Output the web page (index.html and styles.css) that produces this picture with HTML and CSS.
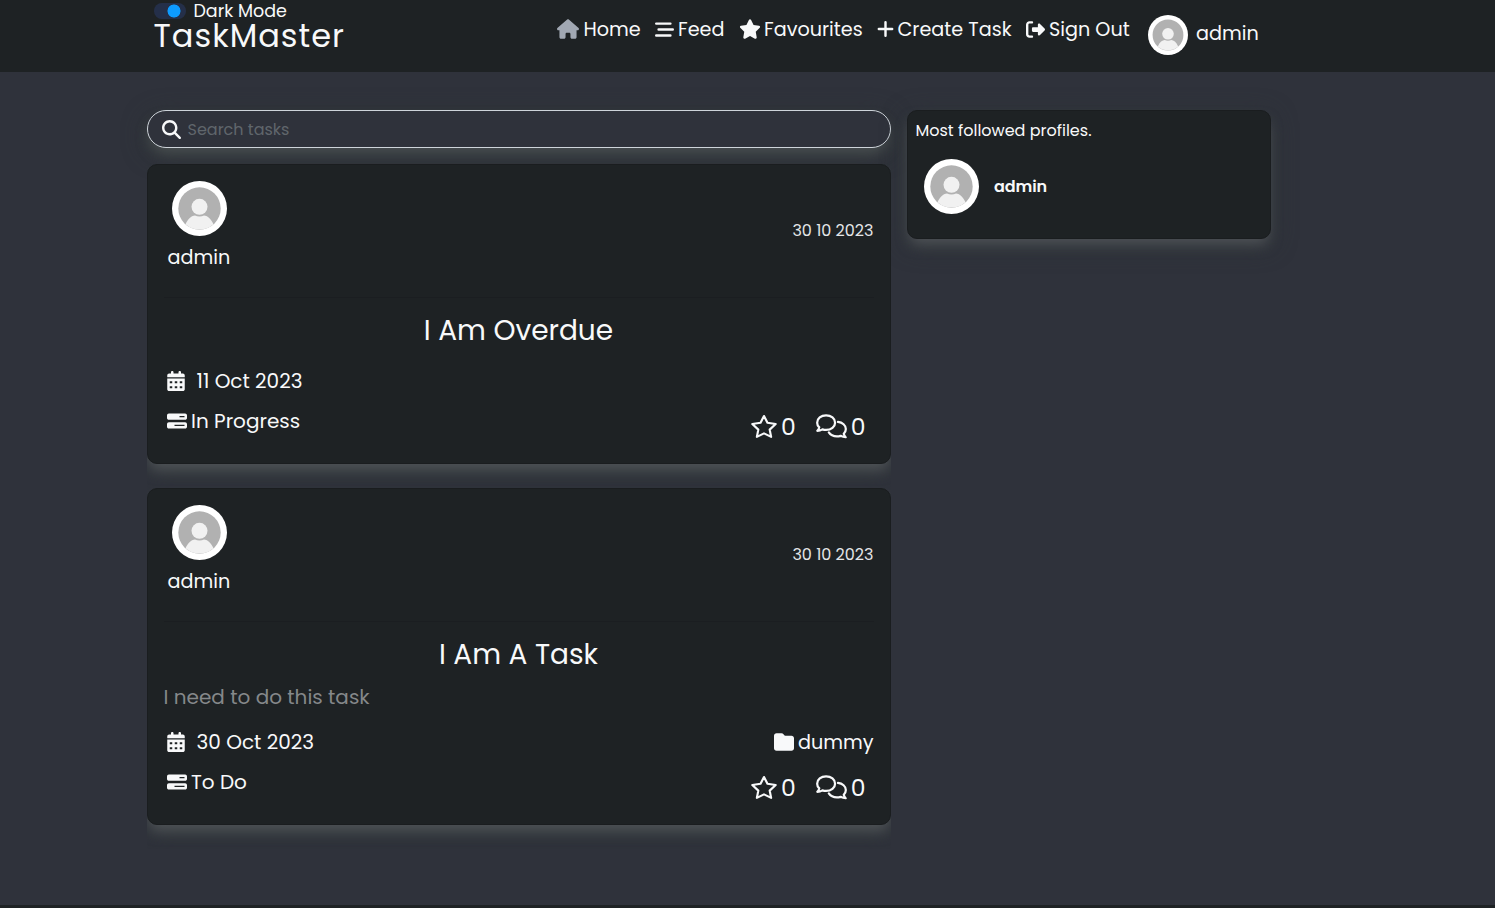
FILE: index.html
```
<!DOCTYPE html>
<html lang="en">
<head>
<meta charset="utf-8">
<title>TaskMaster</title>
<link rel="stylesheet" href="styles.css">
</head>
<body>
<svg class="sprite" aria-hidden="true">
  <symbol id="home" viewBox="0 0 576 512"><path d="M575.8 255.5c0 18-15 32.1-32 32.1h-32l.7 160.2V472c0 22.1-17.9 40-40 40H392c-22.1 0-40-17.9-40-40V384c0-17.7-14.3-32-32-32H256c-17.7 0-32 14.3-32 32v88c0 22.1-17.9 40-40 40H104c-22.1 0-40-17.9-40-40V287.600H32c-18 0-32-14-32-32.100c0-9 3-17 10-24L266.400 8c7-7 15-8 22-8s15 2 21 7L564.800 231.500c8 7 12 15 11 24z"/></symbol>
  <symbol id="feed" viewBox="0 0 512 512"><path d="M32 96H416M96 256H480M32 416H416" fill="none" stroke="currentColor" stroke-width="64" stroke-linecap="round"/></symbol>
  <symbol id="star" viewBox="0 0 576 512"><path d="M316.900 18C311.600 7 300.400 0 288.100 0s-23.400 7-28.800 18L195 150.300 51.400 171.500c-12 1.800-22 10.200-25.700 21.700s-.7 24.200 7.900 32.700L137.800 329 113.200 474.700c-2 12 3 24.200 12.900 31.300s23 8 33.800 2.300l128.300-68.500 128.300 68.500c10.800 5.700 23.900 4.900 33.800-2.300s14.900-19.300 12.900-31.300L438.500 329 542.700 225.900c8.600-8.500 11.700-21.200 7.900-32.700s-13.700-19.900-25.700-21.700L381.200 150.300 316.900 18z"/></symbol>
  <symbol id="star-line" viewBox="0 0 576 512"><path d="M288 25L365 174 547 201 414 326 446 486 288 408 130 486 162 326 29 201 211 174Z" fill="none" stroke="currentColor" stroke-width="48" stroke-linejoin="round"/></symbol>
  <symbol id="plus" viewBox="0 0 448 512"><path d="M48 256H400M224 80V432" fill="none" stroke="currentColor" stroke-width="64" stroke-linecap="round"/></symbol>
  <symbol id="out" viewBox="0 0 512 512"><path d="M377.900 105.900L500.700 228.700c7.200 7.200 11.300 17.100 11.300 27.300s-4.100 20.100-11.300 27.300L377.900 406.100c-6.400 6.400-15 9.900-24 9.900c-18.700 0-33.900-15.200-33.900-33.900V320H192c-17.700 0-32-14.300-32-32v-64c0-17.700 14.300-32 32-32h128v-62.100c0-18.700 15.200-33.900 33.900-33.900c9 0 17.600 3.600 24 9.900zM160 96H96c-17.700 0-32 14.300-32 32v256c0 17.700 14.300 32 32 32h64c17.700 0 32 14.300 32 32s-14.300 32-32 32H96c-53 0-96-43-96-96V128C0 75 43 32 96 32h64c17.700 0 32 14.300 32 32s-14.300 32-32 32z"/></symbol>
  <symbol id="search" viewBox="0 0 512 512"><path d="M416 208c0 45.900-14.900 88.300-40 122.700L502.600 457.400c12.500 12.500 12.500 32.800 0 45.300s-32.800 12.500-45.300 0L330.700 376c-34.400 25.200-76.800 40-122.700 40C93.100 416 0 322.900 0 208S93.100 0 208 0S416 93.100 416 208zM208 352a144 144 0 1 0 0-288 144 144 0 1 0 0 288z"/></symbol>
  <symbol id="calendar" viewBox="0 0 448 512"><path fill-rule="evenodd" d="M128 0c17.700 0 32 14.300 32 32v32h128V32c0-17.700 14.300-32 32-32s32 14.300 32 32v32h48c26.500 0 48 21.500 48 48v48H0v-48c0-26.500 21.500-48 48-48h48V32c0-17.700 14.300-32 32-32zM0 192H448V464c0 26.500-21.500 48-48 48H48c-26.500 0-48-21.500-48-48zM64 264v48h64v-48zM192 264v48h64v-48zM320 264v48h64v-48zM64 392v48h64v-48zM192 392v48h64v-48zM320 392v48h64v-48z"/></symbol>
  <symbol id="progress" viewBox="0 0 512 512"><path fill-rule="evenodd" d="M448 160H320V128H448v32zM48 64C21.500 64 0 85.500 0 112v64c0 26.500 21.500 48 48 48H464c26.500 0 48-21.500 48-48V112c0-26.500-21.500-48-48-48H48zM448 352v32H192V352H448zM48 288c-26.500 0-48 21.500-48 48v64c0 26.500 21.500 48 48 48H464c26.500 0 48-21.500 48-48V336c0-26.500-21.500-48-48-48H48z"/></symbol>
  <symbol id="folder" viewBox="0 0 512 512"><path d="M64 480H448c35.300 0 64-28.700 64-64V160c0-35.300-28.700-64-64-64H288c-10.100 0-19.600-4.700-25.600-12.800L243.200 57.600C231.100 41.500 212.100 32 192 32H64C28.700 32 0 60.700 0 96V416c0 35.300 28.700 64 64 64z"/></symbol>
  <symbol id="comments" viewBox="0 0 640 512"><g fill="none" stroke="currentColor" stroke-width="46" stroke-linejoin="round" stroke-linecap="round"><path d="M208 24C104 24 24 90 24 176c0 37 16 71 43 98-5 28-19 50-39 70 41 0 76-12 105-29 24 9 49 13 75 13 104 0 186-67 186-152S312 24 208 24Z"/><path d="M454 160c92 10 162 72 162 148 0 38-16 72-43 99 5 27 19 50 39 70-41 0-76-12-105-28-23 8-48 12-75 12-73 0-136-33-167-82"/></g></symbol>
  <symbol id="person" viewBox="0 0 55 55"><circle cx="27.500" cy="27.500" r="27.500" fill="#fff"/><circle cx="27.500" cy="27.500" r="21.200" fill="#b1b1b1"/><circle cx="27.500" cy="25.800" r="8" fill="#f1f1f1"/><path d="M13.500 43.300C16 37.500 20 34.500 23 34.500c2.500 1.300 6.500 1.300 9 0 3 0 7 3 9.500 8.800a21.200 21.200 0 0 1-28 0Z" fill="#f1f1f1"/></symbol>
</svg>
<header class="navbar">
  <div class="brand">
    <div class="mode"><span class="switch"></span><span class="mode-label">Dark Mode</span></div>
    <div class="logo">TaskMaster</div>
  </div>
  <nav class="links">
    <a class="link home"><svg class="i22"><use href="#home"/></svg><span>Home</span></a>
    <a class="link feed"><svg class="i19"><use href="#feed"/></svg><span>Feed</span></a>
    <a class="link fav"><svg class="i22"><use href="#star"/></svg><span>Favourites</span></a>
    <a class="link create"><svg class="i17"><use href="#plus"/></svg><span>Create Task</span></a>
    <a class="link out"><svg class="i19"><use href="#out"/></svg><span>Sign Out</span></a>
    <a class="me"><svg class="avatar-sm"><use href="#person"/></svg><span>admin</span></a>
  </nav>
</header>
<main class="page">
  <section class="tasks">
    <div class="search"><svg class="i19"><use href="#search"/></svg><span>Search tasks</span></div>
    <article class="card">
      <div class="card-head">
        <div class="owner"><svg class="avatar"><use href="#person"/></svg><span>admin</span></div>
        <span class="date">30 10 2023</span>
      </div>
      <h2 class="title overdue">I Am Overdue</h2>
      <div class="row due"><span class="item"><svg class="cal"><use href="#calendar"/></svg><span class="due-text">11 Oct 2023</span></span></div>
      <div class="row status"><span class="item"><svg class="i20"><use href="#progress"/></svg><span>In Progress</span></span>
        <span class="counts"><svg class="star"><use href="#star-line"/></svg><span class="n">0</span><svg class="talk"><use href="#comments"/></svg><span class="n">0</span></span></div>
    </article>
    <article class="card">
      <div class="card-head">
        <div class="owner"><svg class="avatar"><use href="#person"/></svg><span>admin</span></div>
        <span class="date">30 10 2023</span>
      </div>
      <h2 class="title">I Am A Task</h2>
      <p class="desc">I need to do this task</p>
      <div class="row due"><span class="item"><svg class="cal"><use href="#calendar"/></svg><span class="due-text">30 Oct 2023</span></span><span class="item folder"><svg class="i20"><use href="#folder"/></svg><span>dummy</span></span></div>
      <div class="row status"><span class="item"><svg class="i20"><use href="#progress"/></svg><span>To Do</span></span>
        <span class="counts"><svg class="star"><use href="#star-line"/></svg><span class="n">0</span><svg class="talk"><use href="#comments"/></svg><span class="n">0</span></span></div>
    </article>
  </section>
  <aside class="profiles">
    <p class="profiles-title">Most followed profiles.</p>
    <div class="profile"><svg class="avatar"><use href="#person"/></svg><strong>admin</strong></div>
  </aside>
</main>
<footer class="footer"></footer>
</body>
</html>
```

FILE: styles.css
```
* { box-sizing: border-box; }
body { margin: 0; height: 908px; overflow: hidden; display: flex; flex-direction: column; background: #2f323b; color: #f8f9fa; font-family: Poppins, Inter, "Open Sans", sans-serif; font-weight: 400; font-size: 19.2px; }
svg { fill: currentColor; flex: none; display: block; }
span, h2, p, strong { white-space: nowrap; }
.sprite { width: 0; height: 0; position: absolute; }
.navbar { height: 72px; flex: none; background: #1e2224; display: flex; padding-left: 154px; }
.brand { width: 403px; flex: none; }
.mode { display: flex; align-items: center; height: 22px; gap: 7.500px; font-size: 17.500px; line-height: 17px; }
.switch { width: 32px; height: 16px; border-radius: 8px; background: radial-gradient(circle at 20px 8px, #0d9bff 6.200px, #242f49 6.800px); }
.logo { font-size: 32px; line-height: 28px; letter-spacing: 1px; text-indent: -.5px; }
.links { display: flex; align-items: flex-start; }
.link { display: flex; align-items: center; height: 30px; margin-top: 14px; gap: 4px; }
.home { width: 98px; gap: 4.500px; }
.feed { width: 84px; }
.fav { width: 138px; gap: 3px; }
.create { width: 149px; gap: 3.500px; }
.out { width: 122px; }
.home svg { color: #a1a8b3; }
.me { display: flex; align-items: center; height: 40px; margin-top: 15px; gap: 8px; }
.me span { margin-top: -3px; }
.avatar-sm { width: 40px; height: 40px; }
.avatar { width: 55px; height: 55px; }
.i17 { width: 17px; height: 20px; }
.i19 { width: 19px; height: 19px; }
.i20 { width: 20px; height: 20px; }
.i22 { width: 22px; height: 20px; }
.page { display: grid; grid-template-columns: 744px 364px; column-gap: 16px; align-items: start; padding: 38px 0 0 147px; height: 833px; flex: none; }
.search { height: 38px; margin-bottom: 16px; border: 1px solid #ced4da; border-radius: 19px; display: flex; align-items: center; padding-left: 13.500px; gap: 7px; font-size: 16px; box-shadow: 0 8px 14px -3px #4a5052, 0 6px 24px #2f3637; background: #2f323b; }
.search span { color: #60666c; }
.card, .profiles { background: #1e2224; border: 1px solid #1a1d1f; border-radius: 10px; }
.card { padding: 16px 16px 14px 15.500px; margin-bottom: 24px; box-shadow: 0 8px 14px -2px #505458, 0 8px 24px #2f3638; clip-path: inset(0 0 -24px 0); }
.card-head { height: 117px; border-bottom: 1px solid #1b1e21; display: flex; justify-content: space-between; }
.owner { display: flex; flex-direction: column; padding-left: 4px; line-height: 30px; }
.owner .avatar { margin: 0 0 7px 4.500px; }
.date { margin-top: 38px; line-height: 24px; font-size: 16px; color: #e4e6e8; margin-right: .5px; }
.title { margin: 12px 0 0; height: 42px; line-height: 42px; text-align: center; font-size: 28px; font-weight: 400; padding-right: .5px; }
.desc { margin: 5px 0 0; height: 32px; line-height: 32px; color: #85888a; font-size: 20px; }
.row { display: flex; justify-content: space-between; padding-left: 3.500px; }
.due { margin-top: 13px; height: 32px; }
.overdue + .due { margin-bottom: 1px; }
.status { margin-top: 8px; height: 44px; }
.item { display: flex; align-items: center; height: 32px; gap: 4px; font-size: 20px; }
.folder { font-size: 19.200px; padding-right: .5px; }
.cal { width: 18px; height: 20px; }
.due-text { margin-left: 7.500px; }
.counts { display: flex; align-items: center; height: 42px; padding-right: 8.500px; font-size: 23.500px; }
.star { width: 26px; height: 25px; }
.talk { width: 31px; height: 25px; margin-left: 20px; }
.n { margin-left: 4px; }
.profiles { height: 129px; padding: 8px 8px 8px 7.500px; box-shadow: 0 8px 14px -3px #505358, 0 6px 24px #2f3638; }
.profiles-title { margin: 0; font-size: 16px; line-height: 24px; }
.profile { display: flex; align-items: center; gap: 15px; margin: 16px 0 0 8.500px; font-size: 16px; }
.profile strong { font-weight: 600; letter-spacing: -.1px; }
.footer { height: 3px; background: #1e2224; }
```
